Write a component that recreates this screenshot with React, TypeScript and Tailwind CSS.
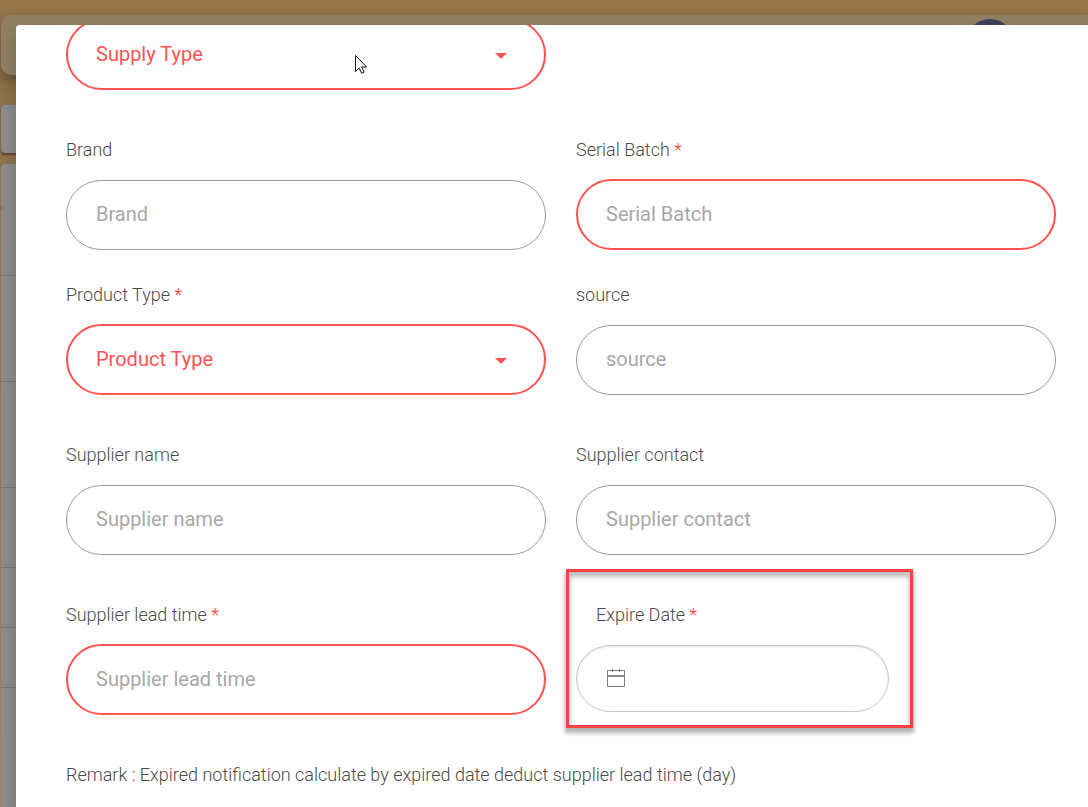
import React, { useId } from "react";

function Caption({ htmlFor, text, required }: { htmlFor: string; text: string; required?: boolean }) {
  return (
    <label htmlFor={htmlFor} className="block text-lg leading-7 font-light text-[#4a4a4a]">
      {text}
      {required && <span className="text-[#ff3a2d]"> *</span>}
    </label>
  );
}

function TextField({ label, required }: { label: string; required?: boolean }) {
  const id = useId();
  return (
    <div className="flex h-[114px] flex-col justify-between">
      <Caption htmlFor={id} text={label} required={required} />
      <input
        id={id}
        type="text"
        placeholder={label}
        className={
          required
            ? "h-[71px] w-full rounded-full border-2 border-[#ff5252] bg-white px-7 pb-0.5 text-xl font-normal text-[#333] outline-none placeholder:text-[#a8a8a8]"
            : "h-[70px] w-full rounded-full border border-[#9b9b9b] bg-white px-[29px] pb-0.5 text-xl font-normal text-[#333] outline-none placeholder:text-[#a8a8a8]"
        }
      />
    </div>
  );
}

function SelectBox({ id, label }: { id?: string; label: string }) {
  return (
    <div className="relative">
      <select
        id={id}
        aria-label={label}
        className="block h-[71px] w-full appearance-none rounded-full border-2 border-[#ff5252] bg-white px-7 pb-0.5 text-xl text-[#ff5252] outline-none"
      >
        <option>{label}</option>
      </select>
      <svg
        viewBox="0 0 12 6"
        className="pointer-events-none absolute top-[34px] right-[39px] h-1.5 w-3 fill-[#ff5252]"
      >
        <path d="M0 0h12L6 6z" />
      </svg>
    </div>
  );
}

function SelectField({ label }: { label: string }) {
  const id = useId();
  return (
    <div className="flex h-[114px] flex-col justify-between">
      <Caption htmlFor={id} text={label} required />
      <SelectBox id={id} label={label} />
    </div>
  );
}

function DateField() {
  return (
    <div className="relative h-[114px]">
      <div className="pl-5">
        <Caption htmlFor="expire-date" text="Expire Date" required />
      </div>
      <div className="relative mt-4 w-[313px]">
        <input
          id="expire-date"
          type="text"
          className="block h-[67px] w-full rounded-full border border-[#c8c8c8] bg-white pr-8 pl-16 text-xl shadow-[inset_0_1px_2px_rgba(0,0,0,0.12)] outline-none"
        />
        <svg
          viewBox="0 0 18 18"
          className="pointer-events-none absolute top-6 left-[31px] size-[18px] fill-none stroke-[#7b7b7b]"
        >
          <path d="M.5 1.5h17v16H.5zM5.5 0v3M12.5 0v3" />
          <path d="M0 7h18" strokeWidth="2" className="stroke-[#8c8c8c]" />
        </svg>
      </div>
      <div className="pointer-events-none absolute -top-8 -left-2.5 h-[159px] w-[347px] border-3 border-[#ff4343] shadow-[0_4px_4px_1px_rgba(0,0,0,0.3),inset_0_4px_4px_1px_rgba(0,0,0,0.25)]" />
    </div>
  );
}

function Backdrop() {
  return (
    <div
      aria-hidden="true"
      className="absolute inset-0 flex flex-col bg-linear-to-b from-[#96764a] via-[#8d7048] via-10% to-[#a38051] pt-[15px] pl-px"
    >
      <div className="flex h-[60px] shrink-0 justify-end rounded-l-[10px] bg-[#8f7e60] pt-1 pr-[74px] shadow-[0_6px_14px_rgba(0,0,0,0.3)]">
        <div className="size-12 rounded-full bg-[#3a4257]" />
      </div>
      <div className="mt-[30px] h-12 shrink-0 rounded bg-[#8c8c8c] shadow-[0_2px_2px_rgba(0,0,0,0.4)]" />
      <div className="mt-[11px] h-11 shrink-0 rounded bg-[#8c8c8c]" />
      <div className="flex grow flex-col rounded-t bg-[#8c8c8c]">
        <div className="h-[68px] border-b border-[#747474]" />
        <div className="h-[106px] border-b border-[#747474]" />
        <div className="h-[106px] border-b border-[#747474]" />
        <div className="h-20 border-b border-[#747474]" />
        <div className="h-[60px] border-b border-[#747474]" />
        <div className="h-[60px] border-b border-[#747474]" />
      </div>
    </div>
  );
}

export default function App() {
  return (
    <div className="relative flex h-screen flex-col overflow-hidden pt-[25px] pl-4 font-['Roboto',sans-serif]">
      <Backdrop />
      <div
        role="dialog"
        aria-label="Supply details"
        className="relative grow overflow-hidden rounded-tl bg-white pr-8 pl-[50px] shadow-[0_11px_15px_rgba(0,0,0,0.2)]"
      >
        <form className="-mt-1.5">
          <div className="grid grid-cols-2 gap-x-[30px] pb-[46px]">
            <SelectBox label="Supply Type" />
          </div>
          <div className="grid grid-cols-2 gap-x-[30px] pb-[31px]">
            <TextField label="Brand" />
            <TextField label="Serial Batch" required />
          </div>
          <div className="grid grid-cols-2 gap-x-[30px] pb-[46px]">
            <SelectField label="Product Type" />
            <TextField label="source" />
          </div>
          <div className="grid grid-cols-2 gap-x-[30px] pb-[46px]">
            <TextField label="Supplier name" />
            <TextField label="Supplier contact" />
          </div>
          <div className="grid grid-cols-2 gap-x-[30px] pb-[46px]">
            <TextField label="Supplier lead time" required />
            <DateField />
          </div>
          <p className="text-lg leading-7 font-light text-[#4a4a4a]">
            Remark : Expired notification calculate by expired date deduct supplier lead time (day)
          </p>
        </form>
      </div>
      <svg viewBox="0 0 14 20" className="pointer-events-none absolute top-[54px] left-[354px] h-5 w-3.5">
        <path
          d="M1.5 1.5v16l3.7-3.5 2.4 5.3 2.5-1.1-2.4-5.2h4.9z"
          fill="#fff"
          stroke="#111122"
          strokeWidth="1"
        />
      </svg>
    </div>
  );
}
